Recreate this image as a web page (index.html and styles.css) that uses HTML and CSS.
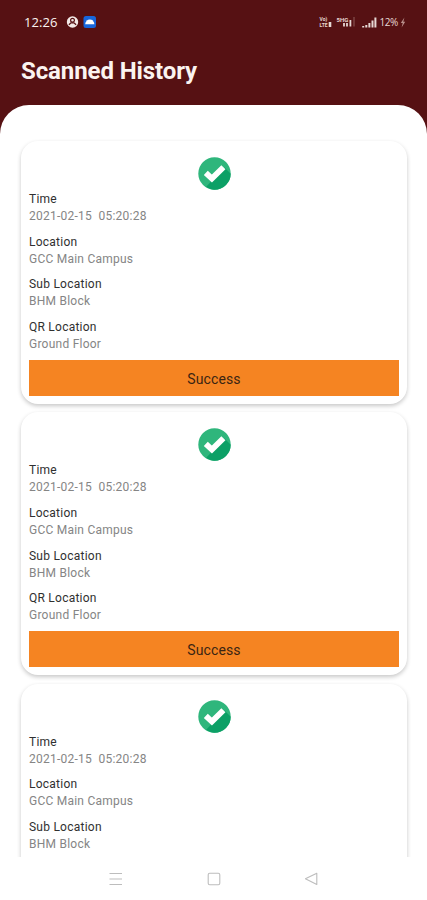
FILE: index.html
```html
<!DOCTYPE html>
<html lang="en">
<head>
    <meta charset="UTF-8">
    <meta name="viewport" content="width=device-width, initial-scale=1.0">
    <title>Scanned History</title>
    <link rel="stylesheet" href="styles.css">
</head>
<body>

    <!-- Check icon shared by all the cards -->
    <svg class="defs" width="0" height="0">
        <defs>
            <clipPath id="circle"><circle cx="16.5" cy="16.5" r="16.2"/></clipPath>
            <symbol id="check" viewBox="0 0 33 33">
                <circle cx="16.5" cy="16.5" r="16.2" fill="#2fb67c"/>
                <path d="M26.5 10.5L37 21L24 37L8 30L13.5 24z" fill="#0ca066" clip-path="url(#circle)"/>
                <path d="M7.8 15.9L13.9 21.6L25.4 10.2" fill="none" stroke="#fff" stroke-width="5.8"/>
            </symbol>
        </defs>
    </svg>

    <header class="header">
        <div class="status-bar">
            <span class="clock">12:26</span>
            <svg class="status-icons" width="30" height="14" viewBox="0 0 30 14">
                <circle cx="6.5" cy="7" r="5.7" fill="#f3e9e6"/>
                <circle cx="6.5" cy="5.2" r="1.9" fill="none" stroke="#561113" stroke-width="1.2"/>
                <path d="M2.9 9.8L5 7.8H8L10.1 9.8" fill="none" stroke="#561113" stroke-width="1.3"/>
                <rect x="17.5" y="1" width="12.5" height="12" rx="2.5" fill="#1766dc"/>
                <path d="M19.2 9.2a4.6 4.6 0 0 1 9.2 0z" fill="#fff"/>
                <path d="M20.8 5.3l1 1M26.8 5.3l-1 1" stroke="#fff" stroke-width="0.8"/>
            </svg>
            <div class="network">
                <span class="volte"><span>Vo)</span><span>LTE</span></span>
                <svg class="dual" width="4" height="10" viewBox="0 0 4 10">
                    <path d="M2 5V10" stroke="#e6d8d4" stroke-width="2.6"/>
                </svg>
                <span class="net-type">5HG</span>
                <svg class="signal-small" width="12" height="10" viewBox="0 0 12 10">
                    <path d="M1 9.5V6M4 9.5V6M7.4 9.5V3" stroke="#e6d8d4" stroke-width="1.8"/>
                    <path d="M11 9.5V0" stroke="#8d5c5a" stroke-width="1"/>
                </svg>
                <svg class="signal" width="15" height="11" viewBox="0 0 15 11">
                    <path d="M1.2 10.5V9M4.3 10.5V8M7.4 10.5V6M10.5 10.5V3.5M13.4 10.5V0.5" stroke="#e6d8d4" stroke-width="2"/>
                </svg>
                <span class="battery">12%</span>
                <svg width="6" height="11" viewBox="0 0 6 11">
                    <path d="M4.4 0.5L0.8 6H2.7L1.6 10.5L5.2 4.8H3.3z" fill="#b98f8b"/>
                </svg>
            </div>
        </div>
        <h1>Scanned History</h1>
    </header>

    <main class="content">
        <div class="card">
            <svg class="check"><use href="#check"/></svg>
            <dl>
                <dt>Time</dt>
                <dd>2021-02-15&nbsp; 05:20:28</dd>
                <dt>Location</dt>
                <dd>GCC Main Campus</dd>
                <dt>Sub Location</dt>
                <dd>BHM Block</dd>
                <dt>QR Location</dt>
                <dd>Ground Floor</dd>
            </dl>
            <div class="status">Success</div>
        </div>

        <div class="card">
            <svg class="check"><use href="#check"/></svg>
            <dl>
                <dt>Time</dt>
                <dd>2021-02-15&nbsp; 05:20:28</dd>
                <dt>Location</dt>
                <dd>GCC Main Campus</dd>
                <dt>Sub Location</dt>
                <dd>BHM Block</dd>
                <dt>QR Location</dt>
                <dd>Ground Floor</dd>
            </dl>
            <div class="status">Success</div>
        </div>

        <div class="card">
            <svg class="check"><use href="#check"/></svg>
            <dl>
                <dt>Time</dt>
                <dd>2021-02-15&nbsp; 05:20:28</dd>
                <dt>Location</dt>
                <dd>GCC Main Campus</dd>
                <dt>Sub Location</dt>
                <dd>BHM Block</dd>
            </dl>
        </div>
    </main>

    <!-- System navigation -->
    <nav class="nav-bar">
        <svg width="14" height="14" viewBox="0 0 14 14">
            <path d="M0.5 1.5H13M0.5 7H13M0.5 12.5H13"/>
        </svg>
        <svg width="14" height="14" viewBox="0 0 14 14">
            <rect x="1.2" y="1.2" width="11.6" height="11.6" rx="1.5"/>
        </svg>
        <svg width="14" height="14" viewBox="0 0 14 14">
            <path d="M11.8 1.2V12.4L0.4 6.8z" stroke-linejoin="round"/>
        </svg>
    </nav>

</body>
</html>
```
FILE: styles.css
```css
* {
    box-sizing: border-box;
}

body {
    font-family: Roboto, "Liberation Sans", sans-serif;
    background-color: #ffffff;
    margin: 0;
    height: 900px;
    display: flex;
    flex-direction: column;
    overflow: hidden;
}

.defs {
    position: absolute;
}

/* Header */
.header {
    background-color: #561113;
    color: #fbf3f0;
    height: 135px;
    flex: none;
    padding: 0 21px;
}

.status-bar {
    display: flex;
    align-items: center;
    height: 44px;
    padding-left: 3px;
}

.clock {
    font-family: "Open Sans", sans-serif;
    font-size: 13px;
    width: 42px;
    letter-spacing: 0.1px;
}

.network {
    display: flex;
    align-items: center;
    margin-left: auto;
    color: #e6d8d4;
}

.volte {
    display: flex;
    flex-direction: column;
    font-size: 5px;
    font-weight: bold;
    line-height: 6px;
    width: 9px;
}

.dual {
    margin-right: 4px;
}

.net-type {
    font-size: 6px;
    font-weight: bold;
    margin-top: -5px;
    width: 7px;
}

.signal-small {
    margin-right: 7px;
}

.signal {
    margin-right: 2px;
}

.battery {
    font-family: "Open Sans", sans-serif;
    font-size: 10px;
    letter-spacing: -0.4px;
    margin-right: 2px;
}

h1 {
    font-size: 24px;
    line-height: 30px;
    font-weight: bold;
    margin: 12px 0 0;
    letter-spacing: -0.1px;
}

/* List of scans */
.content {
    flex: 1;
    min-height: 0;
    margin-top: -30px;
    padding: 36px 20px 0 21px;
    background-color: #ffffff;
    border-radius: 29px 29px 0 0;
    overflow: hidden;
}

.card {
    height: 263px;
    margin-bottom: 8.4px;
    padding: 16px 8px 0;
    background-color: #ffffff;
    border-radius: 17px;
    box-shadow: 0 2px 4px rgba(0, 0, 0, 0.22);
}

.check {
    display: block;
    width: 33px;
    height: 33px;
    margin: 0 auto;
}

dl {
    margin: 0;
    padding-top: 1px;
}

dt, dd {
    margin: 0;
    font-size: 12px;
    line-height: 17px;
    letter-spacing: 0.24px;
}

dt {
    color: #303030;
}

dd {
    color: #858585;
    margin-bottom: 8.7px;
}

dd:last-child {
    margin-bottom: 7px;
}

.status {
    height: 36px;
    background-color: #f58422;
    color: #3b2413;
    font-size: 14px;
    line-height: 38px;
    letter-spacing: 0.1px;
    text-align: center;
}

/* Navigation bar */
.nav-bar {
    flex: none;
    display: flex;
    justify-content: center;
    align-items: center;
    gap: 84px;
    height: 43px;
    background-color: #ffffff;
}

.nav-bar svg {
    fill: none;
    stroke: #bdbdbd;
    stroke-width: 1.1;
}
```
